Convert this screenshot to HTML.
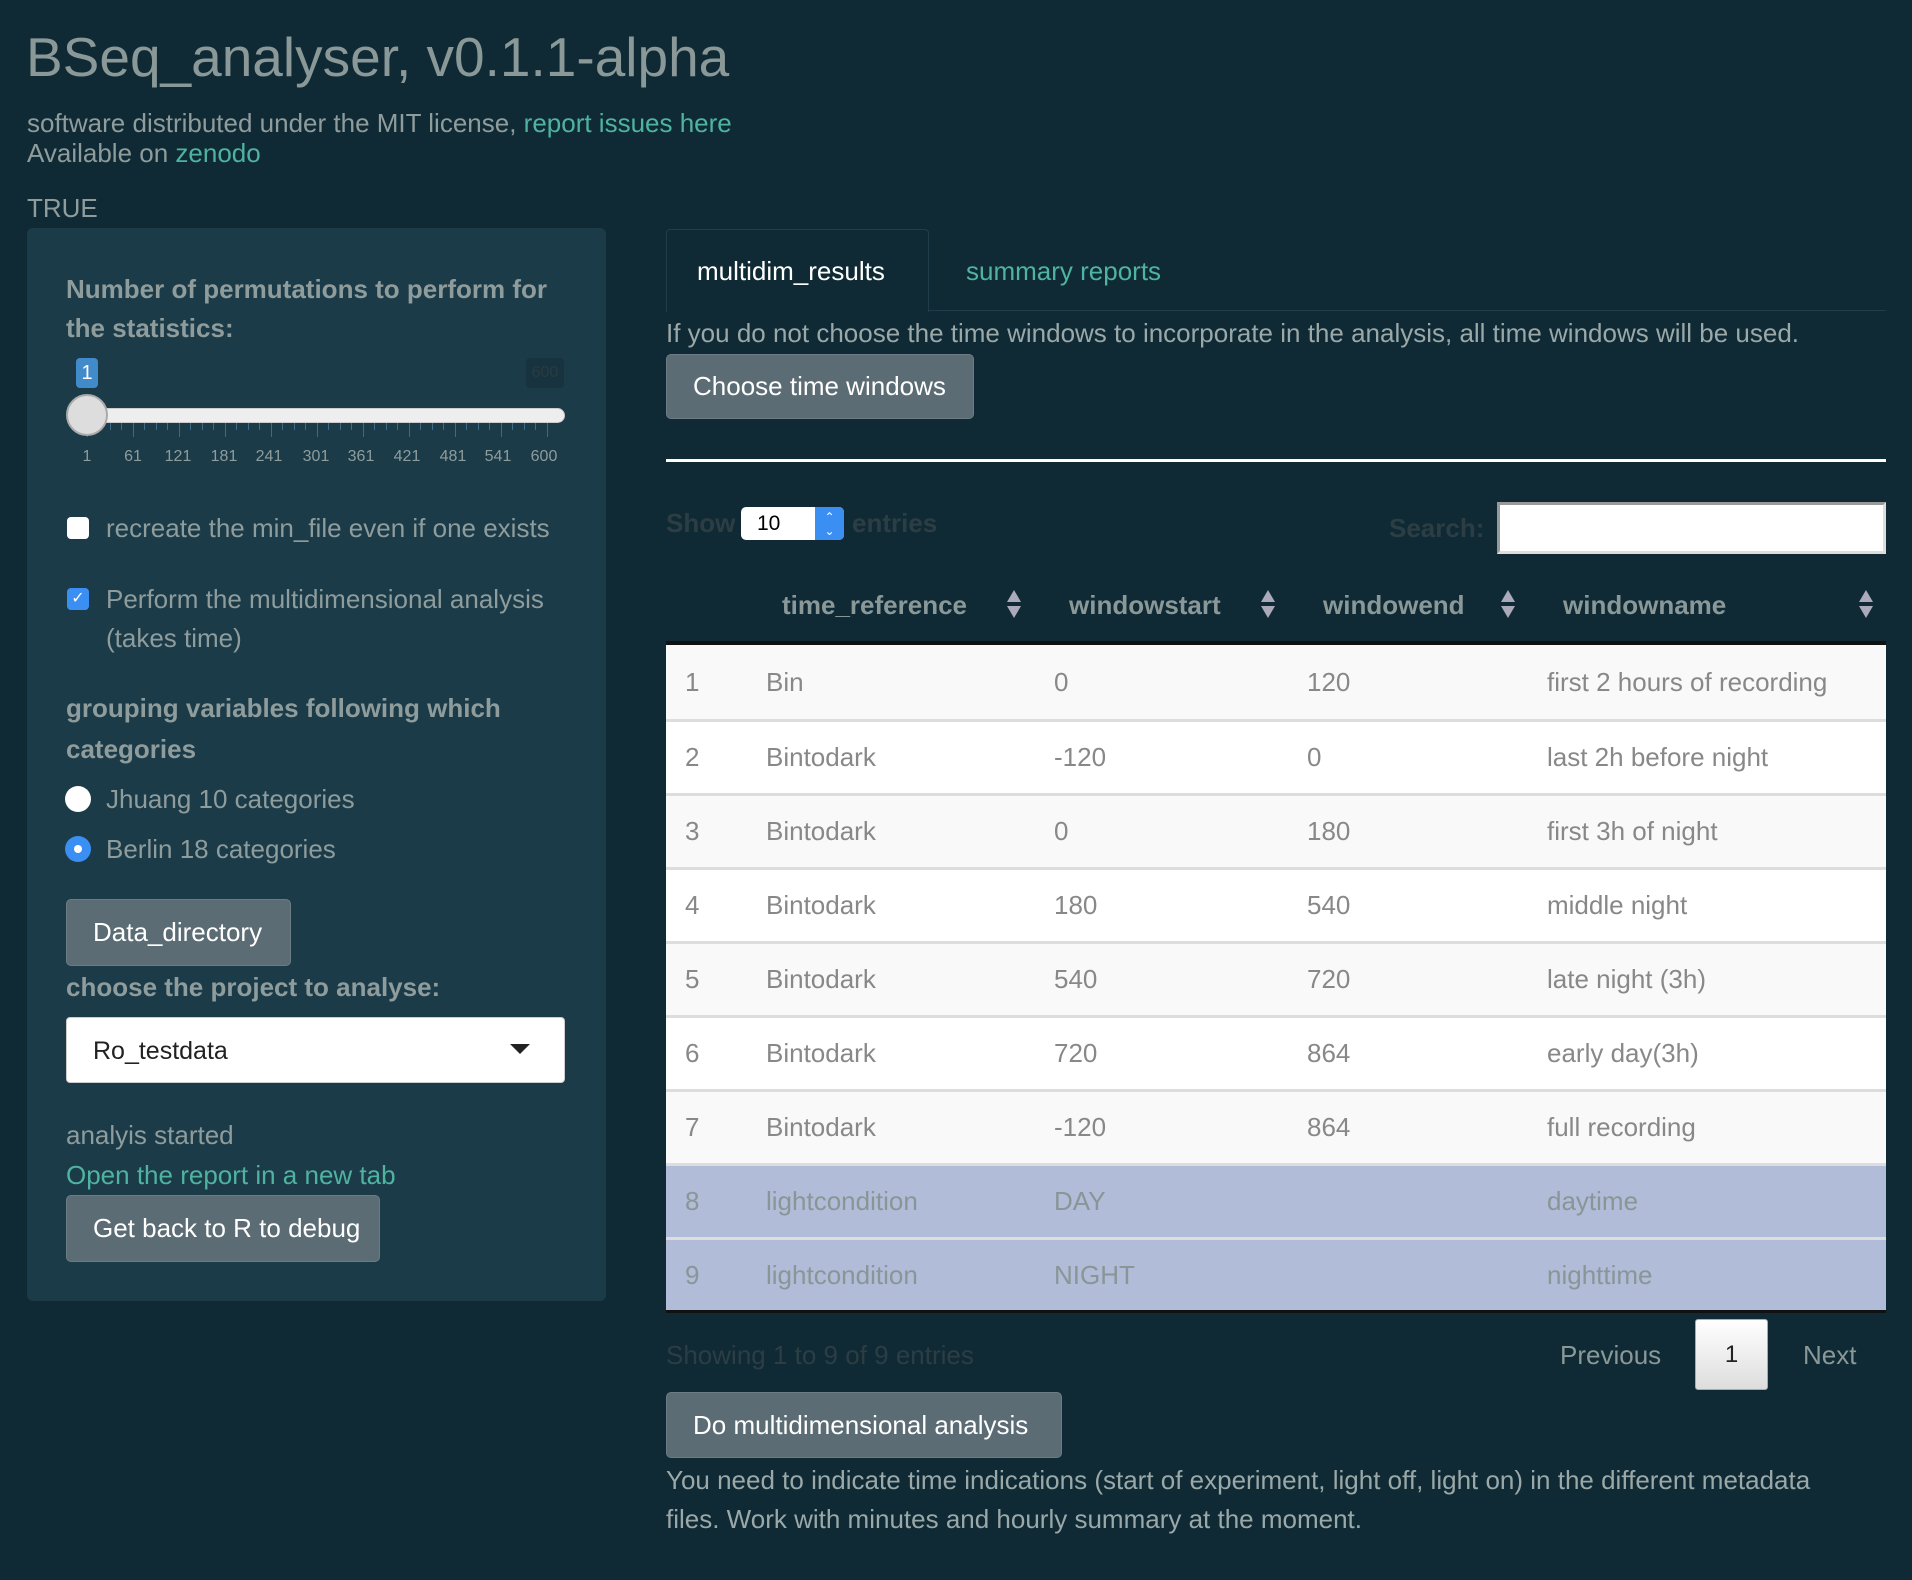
<!DOCTYPE html>
<html><head><meta charset="utf-8"><style>
*{margin:0;padding:0;box-sizing:border-box}
body{width:1912px;height:1580px;background:#0f2a35;font-family:"Liberation Sans",sans-serif;color:#8f9c9c;position:relative;overflow:hidden}
.a{position:absolute;white-space:nowrap;line-height:40px}
.l{color:#4fb3a0}
.b{font-weight:bold}
.btn{position:absolute;background:#5b6c74;border-radius:5px;color:#fff;font-size:26px;line-height:40px;padding-left:26px;border:1px solid #6c7c84}
.tk{position:absolute;width:1px;background:#3d6a8a}
.row{position:absolute;left:666px;width:1220px;height:74px;border-top:3px solid #ddd;font-size:26px;color:#888}
.row span{position:absolute;top:15px;line-height:40px}
.sort{position:absolute;width:0;height:0;border-left:7px solid transparent;border-right:7px solid transparent}
</style></head><body>
<div class="a" style="left:26px;top:22px;font-size:55px;line-height:70px;color:#8a9898">BSeq_analyser, v0.1.1-alpha</div>
<div class="a" style="left:27px;top:103px;font-size:26px">software distributed under the MIT license, <span class="l">report issues here</span></div>
<div class="a" style="left:27px;top:133px;font-size:26px">Available on <span class="l">zenodo</span></div>
<div class="a" style="left:27px;top:188px;font-size:26px">TRUE</div>

<div style="position:absolute;left:27px;top:228px;width:579px;height:1073px;background:#1b3b49;border-radius:6px"></div>
<div class="a b" style="left:66px;top:269px;font-size:26px">Number of permutations to perform for</div>
<div class="a b" style="left:66px;top:308px;font-size:26px">the statistics:</div>
<div style="position:absolute;left:76px;top:358px;width:22px;height:30px;background:#428bca;border-radius:4px;color:#fff;font-size:20px;text-align:center;line-height:30px">1</div>
<div style="position:absolute;left:526px;top:358px;width:38px;height:30px;background:#16333f;border-radius:4px;color:#2a3b40;font-size:16px;text-align:center;line-height:30px">600</div>
<div style="position:absolute;left:67px;top:408px;width:498px;height:15px;background:#eee;border-radius:8px;border:1px solid #ccc"></div>
<div style="position:absolute;left:87px;top:423px;width:478px;height:15px">
<div class="tk" style="left:0;height:14px"></div><div class="tk" style="left:11px;height:7px"></div><div class="tk" style="left:23px;height:7px"></div><div class="tk" style="left:34px;height:7px"></div><div class="tk" style="left:46px;height:14px"></div><div class="tk" style="left:57px;height:7px"></div><div class="tk" style="left:69px;height:7px"></div><div class="tk" style="left:80px;height:7px"></div><div class="tk" style="left:92px;height:14px"></div><div class="tk" style="left:103px;height:7px"></div><div class="tk" style="left:115px;height:7px"></div><div class="tk" style="left:126px;height:7px"></div><div class="tk" style="left:138px;height:14px"></div><div class="tk" style="left:149px;height:7px"></div><div class="tk" style="left:161px;height:7px"></div><div class="tk" style="left:172px;height:7px"></div><div class="tk" style="left:184px;height:14px"></div><div class="tk" style="left:195px;height:7px"></div><div class="tk" style="left:207px;height:7px"></div><div class="tk" style="left:218px;height:7px"></div><div class="tk" style="left:230px;height:14px"></div><div class="tk" style="left:241px;height:7px"></div><div class="tk" style="left:253px;height:7px"></div><div class="tk" style="left:264px;height:7px"></div><div class="tk" style="left:276px;height:14px"></div><div class="tk" style="left:287px;height:7px"></div><div class="tk" style="left:299px;height:7px"></div><div class="tk" style="left:310px;height:7px"></div><div class="tk" style="left:322px;height:14px"></div><div class="tk" style="left:333px;height:7px"></div><div class="tk" style="left:345px;height:7px"></div><div class="tk" style="left:356px;height:7px"></div><div class="tk" style="left:368px;height:14px"></div><div class="tk" style="left:379px;height:7px"></div><div class="tk" style="left:391px;height:7px"></div><div class="tk" style="left:402px;height:7px"></div><div class="tk" style="left:414px;height:14px"></div><div class="tk" style="left:425px;height:7px"></div><div class="tk" style="left:437px;height:7px"></div><div class="tk" style="left:448px;height:7px"></div><div class="tk" style="left:460px;height:14px"></div>
</div>
<div style="position:absolute;left:66px;top:394px;width:42px;height:42px;border-radius:50%;background:#ddd;border:2px solid #aaa"></div>
<div style="position:absolute;left:60px;top:448px;width:520px;height:24px;font-size:16px;color:#8f9c9c">
<span style="position:absolute;left:27px;transform:translateX(-50%)">1</span><span style="position:absolute;left:73px;transform:translateX(-50%)">61</span><span style="position:absolute;left:118px;transform:translateX(-50%)">121</span><span style="position:absolute;left:164px;transform:translateX(-50%)">181</span><span style="position:absolute;left:209px;transform:translateX(-50%)">241</span><span style="position:absolute;left:256px;transform:translateX(-50%)">301</span><span style="position:absolute;left:301px;transform:translateX(-50%)">361</span><span style="position:absolute;left:347px;transform:translateX(-50%)">421</span><span style="position:absolute;left:393px;transform:translateX(-50%)">481</span><span style="position:absolute;left:438px;transform:translateX(-50%)">541</span><span style="position:absolute;left:484px;transform:translateX(-50%)">600</span></div>

<div style="position:absolute;left:67px;top:517px;width:22px;height:22px;background:#fff;border-radius:4px"></div>
<div class="a" style="left:106px;top:508px;font-size:26px">recreate the min_file even if one exists</div>
<div style="position:absolute;left:67px;top:588px;width:22px;height:22px;background:#3b8ff2;border-radius:4px;color:#fff;font-size:16px;text-align:center;line-height:22px">✓</div>
<div class="a" style="left:106px;top:579px;font-size:26px">Perform the multidimensional analysis</div>
<div class="a" style="left:106px;top:618px;font-size:26px">(takes time)</div>
<div class="a b" style="left:66px;top:688px;font-size:26px">grouping variables following which</div>
<div class="a b" style="left:66px;top:729px;font-size:26px">categories</div>
<div style="position:absolute;left:65px;top:786px;width:26px;height:26px;background:#fff;border-radius:50%"></div>
<div class="a" style="left:106px;top:779px;font-size:26px">Jhuang 10 categories</div>
<div style="position:absolute;left:65px;top:836px;width:26px;height:26px;background:#3b8ff2;border-radius:50%"><div style="position:absolute;left:9px;top:9px;width:8px;height:8px;background:#fff;border-radius:50%"></div></div>
<div class="a" style="left:106px;top:829px;font-size:26px">Berlin 18 categories</div>
<div class="btn" style="left:66px;top:899px;width:225px;height:67px;padding-top:12px">Data_directory</div>
<div class="a b" style="left:66px;top:967px;font-size:26px">choose the project to analyse:</div>
<div style="position:absolute;left:66px;top:1017px;width:499px;height:66px;background:#fff;border-radius:4px;border:1px solid #ccc"></div>
<div class="a" style="left:93px;top:1031px;font-size:25px;color:#222">Ro_testdata</div>
<div style="position:absolute;left:510px;top:1044px;border-left:10px solid transparent;border-right:10px solid transparent;border-top:10px solid #222"></div>
<div class="a" style="left:66px;top:1115px;font-size:26px">analyis started</div>
<div class="a l" style="left:66px;top:1155px;font-size:26px">Open the report in a new tab</div>
<div class="btn" style="left:66px;top:1195px;width:314px;height:67px;padding-top:12px">Get back to R to debug</div>

<!-- right -->
<div style="position:absolute;left:666px;top:310px;width:1220px;height:1px;background:#1f3d4a"></div>
<div style="position:absolute;left:666px;top:229px;width:263px;height:83px;background:#0f2a35;border:1px solid #1f3d4a;border-bottom:none;border-radius:4px 4px 0 0"></div>
<div class="a" style="left:697px;top:251px;font-size:26px;color:#fff">multidim_results</div>
<div class="a l" style="left:966px;top:251px;font-size:26px">summary reports</div>
<div class="a" style="left:666px;top:313px;font-size:26px;color:#9aa8a8">If you do not choose the time windows to incorporate in the analysis, all time windows will be used.</div>
<div class="btn" style="left:666px;top:354px;width:308px;height:65px;padding-top:11px">Choose time windows</div>
<div style="position:absolute;left:666px;top:459px;width:1220px;height:3px;background:#fff"></div>

<div class="a b" style="left:666px;top:503px;font-size:26px;color:#2c3e44">Show</div>
<div style="position:absolute;left:741px;top:507px;width:103px;height:33px;background:#fff;border-radius:5px;overflow:hidden"><div style="position:absolute;left:16px;top:0;line-height:33px;font-size:21px;color:#000">10</div><div style="position:absolute;right:0;top:0;width:29px;height:33px;background:#3b8ff2;color:#fff;font-size:12px;text-align:center;line-height:14px;padding-top:3px">&#8963;<br>&#8964;</div></div>
<div class="a b" style="left:852px;top:503px;font-size:26px;color:#2c3e44">entries</div>
<div class="a b" style="left:1389px;top:508px;font-size:26px;color:#2c3e44">Search:</div>
<div style="position:absolute;left:1497px;top:502px;width:389px;height:52px;background:#fff;border:3px solid #999;border-bottom-color:#ddd;border-right-color:#ddd"></div>

<div class="a b" style="left:782px;top:585px;font-size:26px;color:#8a9898">time_reference</div>
<div class="a b" style="left:1069px;top:585px;font-size:26px;color:#8a9898">windowstart</div>
<div class="a b" style="left:1323px;top:585px;font-size:26px;color:#8a9898">windowend</div>
<div class="a b" style="left:1563px;top:585px;font-size:26px;color:#8a9898">windowname</div>
<div class="sort" style="left:1007px;top:590px;border-bottom:12px solid #aab"></div><div class="sort" style="left:1007px;top:606px;border-top:12px solid #aab"></div>
<div class="sort" style="left:1261px;top:590px;border-bottom:12px solid #aab"></div><div class="sort" style="left:1261px;top:606px;border-top:12px solid #aab"></div>
<div class="sort" style="left:1501px;top:590px;border-bottom:12px solid #aab"></div><div class="sort" style="left:1501px;top:606px;border-top:12px solid #aab"></div>
<div class="sort" style="left:1859px;top:590px;border-bottom:12px solid #aab"></div><div class="sort" style="left:1859px;top:606px;border-top:12px solid #aab"></div>
<div style="position:absolute;left:666px;top:641px;width:1220px;height:4px;background:#111"></div>

<div class="row" style="top:645px;background:#f9f9f9;border-top:none"><span style="left:19px;top:17px">1</span><span style="left:100px;top:17px">Bin</span><span style="left:388px;top:17px">0</span><span style="left:641px;top:17px">120</span><span style="left:881px;top:17px">first 2 hours of recording</span></div>
<div class="row" style="top:719px;background:#fff"><span style="left:19px">2</span><span style="left:100px">Bintodark</span><span style="left:388px">-120</span><span style="left:641px">0</span><span style="left:881px">last 2h before night</span></div>
<div class="row" style="top:793px;background:#f9f9f9"><span style="left:19px">3</span><span style="left:100px">Bintodark</span><span style="left:388px">0</span><span style="left:641px">180</span><span style="left:881px">first 3h of night</span></div>
<div class="row" style="top:867px;background:#fff"><span style="left:19px">4</span><span style="left:100px">Bintodark</span><span style="left:388px">180</span><span style="left:641px">540</span><span style="left:881px">middle night</span></div>
<div class="row" style="top:941px;background:#f9f9f9"><span style="left:19px">5</span><span style="left:100px">Bintodark</span><span style="left:388px">540</span><span style="left:641px">720</span><span style="left:881px">late night (3h)</span></div>
<div class="row" style="top:1015px;background:#fff"><span style="left:19px">6</span><span style="left:100px">Bintodark</span><span style="left:388px">720</span><span style="left:641px">864</span><span style="left:881px">early day(3h)</span></div>
<div class="row" style="top:1089px;background:#f9f9f9"><span style="left:19px">7</span><span style="left:100px">Bintodark</span><span style="left:388px">-120</span><span style="left:641px">864</span><span style="left:881px">full recording</span></div>
<div class="row" style="top:1163px;background:#b0bcd8;color:#8a9596"><span style="left:19px">8</span><span style="left:100px">lightcondition</span><span style="left:388px">DAY</span><span style="left:881px">daytime</span></div>
<div class="row" style="top:1237px;background:#b0bcd8;color:#8a9596"><span style="left:19px">9</span><span style="left:100px">lightcondition</span><span style="left:388px">NIGHT</span><span style="left:881px">nighttime</span></div>
<div style="position:absolute;left:666px;top:1310px;width:1220px;height:3px;background:#111"></div>

<div class="a" style="left:666px;top:1335px;font-size:26px;color:#2c3e44">Showing 1 to 9 of 9 entries</div>
<div class="a" style="left:1560px;top:1335px;font-size:26px;color:#8a9898">Previous</div>
<div style="position:absolute;left:1695px;top:1319px;width:73px;height:71px;background:linear-gradient(#fff,#ddd);border:1px solid #aaa;border-radius:3px;font-size:24px;color:#222;text-align:center;line-height:69px">1</div>
<div class="a" style="left:1803px;top:1335px;font-size:26px;color:#8a9898">Next</div>
<div class="btn" style="left:666px;top:1392px;width:396px;height:66px;padding-top:12px">Do multidimensional analysis</div>
<div class="a" style="left:666px;top:1460px;font-size:26px;color:#9aa8a8">You need to indicate time indications (start of experiment, light off, light on) in the different metadata</div>
<div class="a" style="left:666px;top:1499px;font-size:26px;color:#9aa8a8">files. Work with minutes and hourly summary at the moment.</div>
</body></html>
